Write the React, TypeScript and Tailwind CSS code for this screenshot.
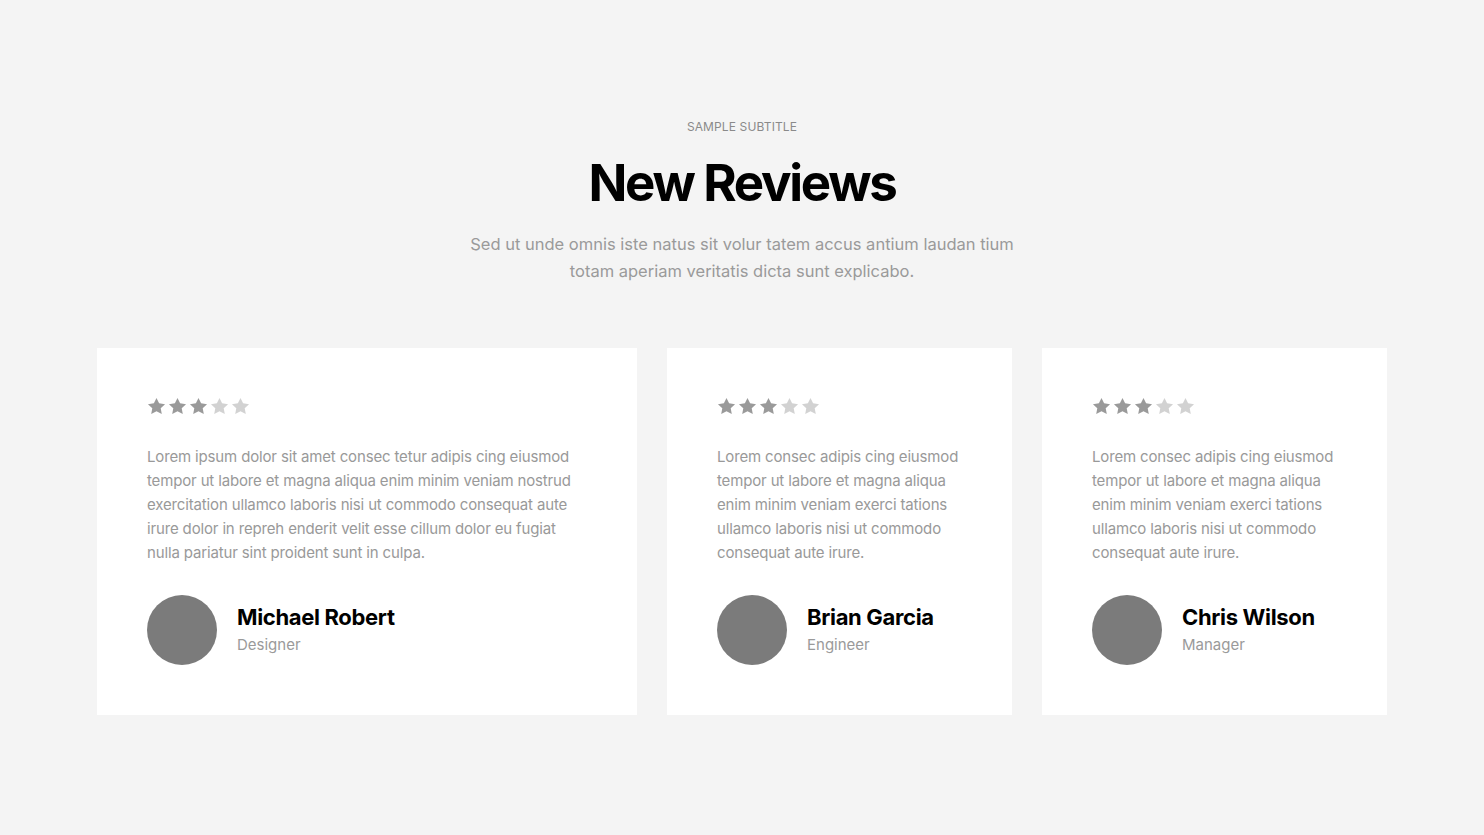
import React from "react";

const Star = ({ filled }: { filled: boolean }) => (
  <svg width="19" height="19" viewBox="0 0 24 24" className={filled ? "fill-[#9a9a9a]" : "fill-[#d2d2d2]"}>
    <path d="M12 1.2l3.3 6.8 7.5 1-5.5 5.2 1.4 7.4L12 18l-6.7 3.6 1.4-7.4L1.2 9l7.5-1z" />
  </svg>
);

const reviews = [
  {
    text: "Lorem ipsum dolor sit amet consec tetur adipis cing eiusmod tempor ut labore et magna aliqua enim minim veniam nostrud exercitation ullamco laboris nisi ut commodo consequat aute irure dolor in repreh enderit velit esse cillum dolor eu fugiat nulla pariatur sint proident sunt in culpa.",
    name: "Michael Robert",
    role: "Designer",
  },
  {
    text: "Lorem consec adipis cing eiusmod tempor ut labore et magna aliqua enim minim veniam exerci tations ullamco laboris nisi ut commodo consequat aute irure.",
    name: "Brian Garcia",
    role: "Engineer",
  },
  {
    text: "Lorem consec adipis cing eiusmod tempor ut labore et magna aliqua enim minim veniam exerci tations ullamco laboris nisi ut commodo consequat aute irure.",
    name: "Chris Wilson",
    role: "Manager",
  },
];

export default function App() {
  return (
    <div className="min-h-[835px] w-full bg-[#f4f4f4] font-['Inter','Noto_Sans',sans-serif]">
      <div className="flex flex-col items-center pt-[120px]">
        <p className="text-[12px] leading-[14px] uppercase text-[#8a8a8a] tracking-[0.01em]">Sample Subtitle</p>
        <h1 className="mt-[19px] text-[51px] leading-[60px] font-bold tracking-[-0.045em] text-black">New Reviews</h1>
        <p className="mt-[18px] w-[565px] text-center text-[16.5px] leading-[27px] text-[#9a9a9a]">
          Sed ut unde omnis iste natus sit volur tatem accus antium laudan tium totam aperiam veritatis dicta sunt explicabo.
        </p>
      </div>
      <div className="mx-auto mt-[63px] grid w-[1290px] grid-cols-[540px_345px_345px] gap-[30px]">
        {reviews.map((r) => (
          <div key={r.name} className="bg-white px-[50px] pt-[49px] pb-[50px]">
            <div className="flex gap-[2px]">
              {[0, 1, 2, 3, 4].map((i) => (
                <Star key={i} filled={i < 3} />
              ))}
            </div>
            <p className="mt-[29px] text-[15px] leading-[24px] text-[#999999] tracking-[-0.01em]">{r.text}</p>
            <div className="mt-[30px] flex items-center gap-[20px]">
              <div className="h-[70px] w-[70px] shrink-0 rounded-full bg-[#7b7b7b]" />
              <div className="-mt-[3px]">
                <p className="text-[22px] leading-[28px] font-bold tracking-[-0.015em] text-black">{r.name}</p>
                <p className="mt-[4px] text-[15px] leading-[20px] text-[#9a9a9a]">{r.role}</p>
              </div>
            </div>
          </div>
        ))}
      </div>
    </div>
  );
}
